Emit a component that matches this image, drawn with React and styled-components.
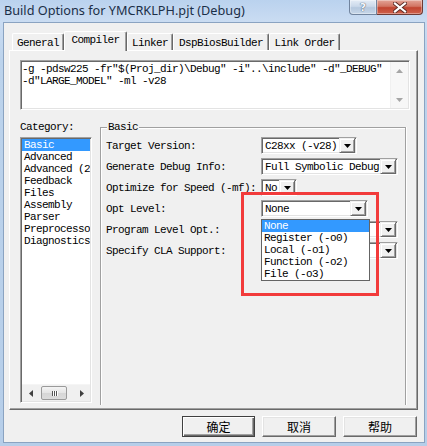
import styled, { createGlobalStyle } from "styled-components";

const mono = `"Liberation Mono", "DejaVu Sans Mono", monospace`;
const cjk = `"Noto Sans CJK SC", "Noto Sans", sans-serif`;

const GlobalStyle = createGlobalStyle`
  html, body {
    margin: 0;
    padding: 0;
    background: #bdd3ec;
  }
  body {
    width: 427px;
    height: 446px;
    overflow: hidden;
  }
`;

const Window = styled.div`
  position: relative;
  width: 427px;
  height: 446px;
  box-sizing: border-box;
  padding: 0 2px 3px 3px;
  display: flex;
  flex-direction: column;
  background: linear-gradient(#bad2ee, #cadcf2 22px, #bcd3ec 60px, #b6cee9);
  font-family: ${mono};
  font-size: 11px;
  letter-spacing: -0.6px;
  color: #000;
`;

const TitleBar = styled.div`
  height: 22px;
  display: flex;
  align-items: flex-start;
  justify-content: space-between;
`;

const Title = styled.div`
  font-family: "Noto Sans", sans-serif;
  font-size: 12.7px;
  letter-spacing: 0;
  color: #1b2f47;
  padding: 2px 0 0 1px;
  line-height: 17px;
`;

const CaptionButtons = styled.div`
  display: flex;
  margin-right: 2px;
`;

const CaptionButton = styled.div`
  width: ${(p) => p.$w}px;
  height: 15px;
  box-sizing: border-box;
  display: flex;
  align-items: center;
  justify-content: center;
  border: 1px solid ${(p) => (p.$close ? "#6e3a34" : "#71849e")};
  border-top: none;
  border-left-width: ${(p) => (p.$close ? 0 : 1)}px;
  border-radius: ${(p) => (p.$close ? "0 0 4px 0" : "0 0 0 4px")};
  background: ${(p) =>
    p.$close
      ? "linear-gradient(#e3a497, #d27563 45%, #c14430 55%, #cf624c)"
      : "linear-gradient(#e4ecf6, #cbd9ea 45%, #b5c8de 55%, #c7d7e9)"};
  box-shadow: inset 0 0 0 1px rgba(255, 255, 255, 0.35);
`;

const HelpGlyph = styled.span`
  font-family: "DejaVu Sans", sans-serif;
  font-weight: bold;
  font-size: 11px;
  letter-spacing: 0;
  line-height: 11px;
  color: #f4f7fb;
  text-shadow: 0 0 1px #4a5b72, 0 0 1px #4a5b72;
`;

const Client = styled.div`
  flex: 1;
  background: #f0f0f0;
  border: 1px solid #8aa3c1;
  padding: 8px 6px 0 5px;
  display: flex;
  flex-direction: column;
`;

const TabStrip = styled.div`
  height: 19px;
  display: flex;
  align-items: flex-end;
  padding-left: 3px;
  position: relative;
  z-index: 1;
`;

const Tab = styled.div`
  width: ${(p) => p.$w}px;
  height: ${(p) => (p.$active ? 20 : 17)}px;
  margin-bottom: ${(p) => (p.$active ? -1 : 0)}px;
  box-sizing: border-box;
  background: #f0f0f0;
  border-top: 1px solid #fff;
  border-left: 1px solid #fff;
  border-right: 1px solid #696969;
  border-radius: 2px 2px 0 0;
  box-shadow: inset -1px 0 0 #a0a0a0;
  display: flex;
  justify-content: center;
  padding-top: ${(p) => (p.$active ? 2 : 3)}px;
  line-height: 12px;
  white-space: nowrap;
`;

const Panel = styled.div`
  height: 360px;
  box-sizing: border-box;
  border: 1px solid;
  border-color: #fff #696969 #696969 #fff;
  box-shadow: inset -1px -1px 0 #a0a0a0;
  padding: 9px 0 0 10px;
  display: flex;
  flex-direction: column;
`;

const Sunken = styled.div`
  box-sizing: border-box;
  border: 1px solid;
  border-color: #a0a0a0 #fff #fff #a0a0a0;
  box-shadow: inset 1px 1px 0 #696969, inset -1px -1px 0 #e3e3e3;
  background: #fff;
`;

const CmdBox = styled(Sunken)`
  width: 390px;
  height: 50px;
  display: flex;
  padding: 1px;
`;

const CmdText = styled.div`
  flex: 1;
  padding: 1px 0 0 0;
  line-height: 12px;
  white-space: pre;
`;

const VScroll = styled.div`
  width: 17px;
  background: #f7f7f7;
  border-left: 1px solid #f0f0f0;
  display: flex;
  flex-direction: column;
  justify-content: space-between;
`;

const ArrowBox = styled.div`
  width: 17px;
  height: 17px;
  display: flex;
  align-items: center;
  justify-content: center;
  color: ${(p) => p.$color || "#a6a6a6"};
`;

const Arrow = ({ dir, color }) => {
  const pts = {
    up: "0,4 3.5,0 7,4",
    down: "0,0 3.5,4 7,0",
    left: "4,0 0,3.5 4,7",
    right: "0,0 4,3.5 0,7",
  }[dir];
  const horiz = dir === "left" || dir === "right";
  return (
    <ArrowBox $color={color}>
      <svg width={horiz ? 4 : 7} height={horiz ? 7 : 4} viewBox={horiz ? "0 0 4 7" : "0 0 7 4"}>
        <polygon points={pts} fill="currentColor" />
      </svg>
    </ArrowBox>
  );
};

const Body = styled.div`
  display: flex;
  gap: 8px;
`;

const LeftColumn = styled.div`
  width: 72px;
  display: flex;
  flex-direction: column;
`;

const Label = styled.div`
  line-height: 12px;
  white-space: nowrap;
  margin-top: ${(p) => p.$mt || 0}px;
`;

const ListBox = styled(Sunken)`
  margin-top: 4px;
  height: 266px;
  padding: 1px;
  display: flex;
  flex-direction: column;
  overflow: hidden;
`;

const ListItems = styled.div`
  flex: 1;
  overflow: hidden;
`;

const ListItem = styled.div`
  height: 12px;
  line-height: 12px;
  padding-left: 2px;
  white-space: nowrap;
  background: ${(p) => (p.$selected ? "#3399ff" : "transparent")};
  color: ${(p) => (p.$selected ? "#fff" : "#000")};
`;

const HScroll = styled.div`
  height: 16px;
  display: flex;
  align-items: center;
  background: #f0f0f0;
  border-top: 1px solid #f5f5f5;
`;

const Thumb = styled.div`
  width: 26px;
  height: 14px;
  margin-left: 2px;
  box-sizing: border-box;
  border: 1px solid #9a9a9a;
  border-radius: 2px;
  background: linear-gradient(#f4f4f4, #e4e4e4 50%, #d6d6d6 51%, #dcdcdc);
  display: flex;
  align-items: center;
  justify-content: center;
  gap: 1px;
`;

const Grip = styled.span`
  width: 1px;
  height: 5px;
  background: #555;
  box-shadow: 1px 0 0 #fff;
`;

const TrackFill = styled.div`
  flex: 1;
`;

const GroupBox = styled.div`
  margin-top: 17px;
  width: 306px;
  height: 278px;
  box-sizing: border-box;
  border: 1px solid #a0a0a0;
  border-bottom: none;
  box-shadow: inset 1px 1px 0 #fff, 1px 0 0 #fff;
  display: flex;
  flex-direction: column;
  padding-left: 5px;
`;

const Legend = styled.div`
  align-self: flex-start;
  margin: -7px 0 0 1px;
  padding: 0 1px;
  background: #f0f0f0;
  line-height: 12px;
`;

const Rows = styled.div`
  margin-top: 2px;
  display: flex;
  flex-direction: column;
`;

const Row = styled.div`
  height: 21px;
  display: flex;
  align-items: center;
`;

const RowLabel = styled.div`
  width: 155px;
  white-space: nowrap;
  line-height: 12px;
`;

const ComboWrap = styled.div`
  position: relative;
`;

const ComboBox = styled(Sunken)`
  width: ${(p) => p.$w}px;
  height: 17px;
  display: flex;
  align-items: center;
  padding: 1px;
`;

const ComboText = styled.div`
  flex: 1;
  padding-left: 2px;
  line-height: 12px;
  white-space: nowrap;
  overflow: hidden;
`;

const DropButton = styled.div`
  width: 16px;
  height: 15px;
  box-sizing: border-box;
  background: #f0f0f0;
  border: 1px solid;
  border-color: #f0f0f0 #696969 #696969 #f0f0f0;
  box-shadow: inset 1px 1px 0 #fff, inset -1px -1px 0 #a0a0a0;
  display: flex;
  align-items: center;
  justify-content: center;
`;

const DropList = styled.div`
  position: absolute;
  left: 0;
  top: 19px;
  width: 109px;
  box-sizing: border-box;
  border: 1px solid #646464;
  background: #fff;
  z-index: 3;
`;

const Highlight = styled.div`
  position: absolute;
  left: 241px;
  top: 192px;
  width: 138px;
  height: 104px;
  box-sizing: border-box;
  border: 3px solid #f23b3b;
  z-index: 5;
  pointer-events: none;
`;

const ButtonRow = styled.div`
  margin-top: 6px;
  padding-right: 1px;
  display: flex;
  justify-content: flex-end;
  gap: 7px;
`;

const DialogButton = styled.button`
  width: ${(p) => (p.$default ? 73 : 74)}px;
  height: 21px;
  box-sizing: border-box;
  padding: 0;
  background: #f0f0f0;
  border: 1px solid;
  border-color: ${(p) => (p.$default ? "#404040" : "#fff #696969 #696969 #fff")};
  box-shadow: ${(p) =>
    p.$default
      ? "inset 1px 1px 0 #fff, inset -1px -1px 0 #696969, inset -2px -2px 0 #a0a0a0"
      : "inset -1px -1px 0 #a0a0a0, inset 1px 1px 0 #e3e3e3"};
  font-family: ${cjk};
  font-size: 12px;
  letter-spacing: 0;
  color: #000;
  line-height: 17px;
`;

const categories = [
  "Basic",
  "Advanced",
  "Advanced (2)",
  "Feedback",
  "Files",
  "Assembly",
  "Parser",
  "Preprocessor",
  "Diagnostics",
];

const tabs = [
  { name: "General", w: 52 },
  { name: "Compiler", w: 63, active: true },
  { name: "Linker", w: 46 },
  { name: "DspBiosBuilder", w: 96 },
  { name: "Link Order", w: 71 },
];

const optLevels = ["None", "Register (-o0)", "Local (-o1)", "Function (-o2)", "File (-o3)"];

const Combo = ({ w, value, children }) => (
  <ComboWrap>
    <ComboBox $w={w}>
      <ComboText>{value}</ComboText>
      <DropButton>
        <Arrow dir="down" color="#000" />
      </DropButton>
    </ComboBox>
    {children}
  </ComboWrap>
);

export default function App() {
  return (
    <Window>
      <GlobalStyle />
      <TitleBar>
        <Title>Build Options for YMCRKLPH.pjt (Debug)</Title>
        <CaptionButtons>
          <CaptionButton $w={28}>
            <HelpGlyph>?</HelpGlyph>
          </CaptionButton>
          <CaptionButton $w={46} $close>
            <svg width="14" height="11" viewBox="0 0 14 11">
              <path d="M2 1.5 L12 9.5 M12 1.5 L2 9.5" stroke="#5b2a24" strokeWidth="4" strokeLinecap="square" />
              <path d="M2 1.5 L12 9.5 M12 1.5 L2 9.5" stroke="#fff" strokeWidth="2.2" strokeLinecap="square" />
            </svg>
          </CaptionButton>
        </CaptionButtons>
      </TitleBar>

      <Client>
        <TabStrip>
          {tabs.map((t) => (
            <Tab key={t.name} $w={t.w} $active={t.active}>
              {t.name}
            </Tab>
          ))}
        </TabStrip>

        <Panel>
          <CmdBox>
            <CmdText>
              {'-g -pdsw225 -fr"$(Proj_dir)\\Debug" -i"..\\include" -d"_DEBUG"\n-d"LARGE_MODEL" -ml -v28'}
            </CmdText>
            <VScroll>
              <Arrow dir="up" />
              <Arrow dir="down" />
            </VScroll>
          </CmdBox>

          <Body>
            <LeftColumn>
              <Label $mt={11}>Category:</Label>
              <ListBox>
                <ListItems>
                  {categories.map((c, i) => (
                    <ListItem key={c} $selected={i === 0}>
                      {c}
                    </ListItem>
                  ))}
                </ListItems>
                <HScroll>
                  <Arrow dir="left" color="#404040" />
                  <Thumb>
                    <Grip />
                    <Grip />
                    <Grip />
                  </Thumb>
                  <TrackFill />
                  <Arrow dir="right" color="#404040" />
                </HScroll>
              </ListBox>
            </LeftColumn>

            <GroupBox>
              <Legend>Basic</Legend>
              <Rows>
                <Row>
                  <RowLabel>Target Version:</RowLabel>
                  <Combo w={96} value="C28xx (-v28)" />
                </Row>
                <Row>
                  <RowLabel>Generate Debug Info:</RowLabel>
                  <Combo w={137} value="Full Symbolic Debug" />
                </Row>
                <Row>
                  <RowLabel>Optimize for Speed (-mf):</RowLabel>
                  <Combo w={36} value="No" />
                </Row>
                <Row>
                  <RowLabel>Opt Level:</RowLabel>
                  <Combo w={107} value="None">
                    <DropList>
                      {optLevels.map((o, i) => (
                        <ListItem key={o} $selected={i === 0}>
                          {o}
                        </ListItem>
                      ))}
                    </DropList>
                  </Combo>
                </Row>
                <Row>
                  <RowLabel>Program Level Opt.:</RowLabel>
                  <Combo w={137} value="" />
                </Row>
                <Row>
                  <RowLabel>Specify CLA Support:</RowLabel>
                  <Combo w={137} value="" />
                </Row>
              </Rows>
            </GroupBox>
          </Body>
        </Panel>

        <ButtonRow>
          <DialogButton $default>确定</DialogButton>
          <DialogButton>取消</DialogButton>
          <DialogButton>帮助</DialogButton>
        </ButtonRow>
      </Client>

      <Highlight />
    </Window>
  );
}
